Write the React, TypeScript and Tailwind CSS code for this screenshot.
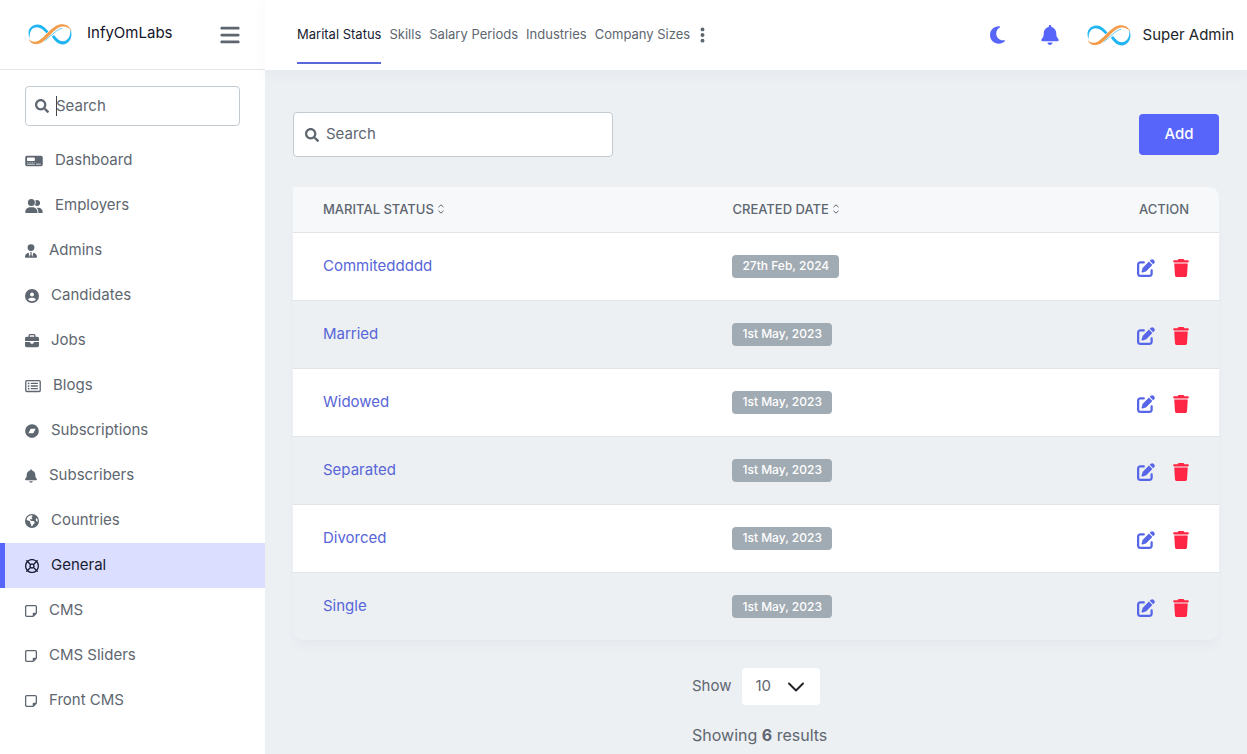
import { useState } from "react";
import { FaSearch } from "react-icons/fa";
import {
  FaBandcamp,
  FaBars,
  FaBell,
  FaBriefcase,
  FaCircleUser,
  FaEarthAmericas,
  FaEllipsisVertical,
  FaMoon,
  FaPenToSquare,
  FaRegLifeRing,
  FaRegNoteSticky,
  FaRegRectangleList,
  FaTachographDigital,
  FaTrash,
  FaUserGroup,
  FaUserTie,
} from "react-icons/fa6";

const menu = [
  { name: "Dashboard", icon: FaTachographDigital, width: "w-[18px]" },
  { name: "Employers", icon: FaUserGroup, width: "w-[18px]" },
  { name: "Admins", icon: FaUserTie, width: "w-3" },
  { name: "Candidates", icon: FaCircleUser, width: "w-[14px]" },
  { name: "Jobs", icon: FaBriefcase, width: "w-[14px]" },
  { name: "Blogs", icon: FaRegRectangleList, width: "w-4" },
  { name: "Subscriptions", icon: FaBandcamp, width: "w-[14px]" },
  { name: "Subscribers", icon: FaBell, width: "w-3" },
  { name: "Countries", icon: FaEarthAmericas, width: "w-[14px]" },
  { name: "General", icon: FaRegLifeRing, width: "w-[14px]" },
  { name: "CMS", icon: FaRegNoteSticky, width: "w-3" },
  { name: "CMS Sliders", icon: FaRegNoteSticky, width: "w-3" },
  { name: "Front CMS", icon: FaRegNoteSticky, width: "w-3" },
];

const tabs = ["Marital Status", "Skills", "Salary Periods", "Industries", "Company Sizes"];

const statuses = [
  { name: "Commiteddddd", date: "27th Feb, 2024" },
  { name: "Married", date: "1st May, 2023" },
  { name: "Widowed", date: "1st May, 2023" },
  { name: "Separated", date: "1st May, 2023" },
  { name: "Divorced", date: "1st May, 2023" },
  { name: "Single", date: "1st May, 2023" },
];

function Logo() {
  return (
    <svg viewBox="0 0 44 21" className="h-[21px] w-11 shrink-0" aria-hidden="true">
      {/* left loop */}
      <path
        d="M1.800 14.500C-1 9 0.500 1 9.500 0.500C14 0.500 17.500 4 20.500 7.500L18.500 9.300C15.500 6 12.500 3.500 8.500 3.300C3.500 3.500 1 8.500 1.800 14.500Z"
        fill="#1fb4f2"
      />
      {/* right loop */}
      <path
        d="M42 4.500C45.500 11 42.500 20 34.500 20.500C30 20.500 27 17 23.800 12.800L26 11C29 14.500 31.500 17.300 35 17.200C40 17 43.500 11.500 42 4.500Z"
        fill="#1fb4f2"
      />
      <path d="M16.500 17L26 9C28.500 6.800 31 5 34 4.300" fill="none" stroke="#1fb4f2" strokeWidth="0.7" />
      {/* ribbon across both loops */}
      <path
        d="M0.500 14.500C3 18.300 8 18.800 12 15.700C18 11.200 22 5.500 27.500 2.200C33 -1 40.500 -0.500 43.500 7C40 2.200 34.500 1.200 29.500 4.200C23.500 8.200 20 14 14.500 18C9.500 21.500 2.500 21 0.500 14.500Z"
        fill="#f39d4c"
      />
    </svg>
  );
}

function SortIcon() {
  return (
    <svg viewBox="0 0 6 10" className="h-[10px] w-[6px]" fill="none" stroke="currentColor" aria-hidden="true">
      <path d="M0.500 3.200L3 0.800L5.500 3.200M0.500 6.800L3 9.200L5.500 6.800" />
    </svg>
  );
}

export default function App() {
  const [active, setActive] = useState("General");
  const [tab, setTab] = useState("Marital Status");

  return (
    <div className="flex min-h-screen bg-[#ecf0f3] font-['Inter','Noto_Sans',sans-serif] text-[15px] text-[#5e6670]">
      {/* Sidebar */}
      <aside className="w-[265px] shrink-0 bg-white">
        <div className="flex h-[70px] items-center border-b border-[#e3e7ea] pr-[25px] pl-7">
          <Logo />
          <a href="#" className="ml-[15px] pb-0.5 text-[#14142b]">
            InfyOmLabs
          </a>
          <button type="button" aria-label="Toggle menu" className="ml-auto">
            <FaBars className="h-[22px] w-5" />
          </button>
        </div>
        <div className="px-[25px] pt-4 pb-3">
          <div className="relative flex h-10 items-center gap-[7px] rounded border border-[#c3cbd1] px-[9px]">
            <FaSearch className="size-[14px] shrink-0" />
            <input
              type="search"
              aria-label="Search menu"
              placeholder="Search"
              className="w-full min-w-0 bg-transparent outline-none placeholder:text-[#5e6670] placeholder:opacity-100"
            />
            {/* text cursor */}
            <span className="absolute top-[9px] left-[30px] h-5 w-px bg-[#3f464d]" />
          </div>
        </div>
        <nav>
          {menu.map(({ name, icon: Icon, width }) => (
            <a
              key={name}
              href="#"
              onClick={() => setActive(name)}
              className={
                active === name
                  ? "flex h-[45px] items-center gap-3 border-l-[5px] border-[#5765fb] bg-[#dbdefe] pl-5 text-[#181c32]"
                  : "flex h-[45px] items-center gap-3 border-l-[5px] border-transparent pl-5"
              }
            >
              <Icon className={"mt-px h-[14px] shrink-0 " + width} />
              {name}
            </a>
          ))}
        </nav>
      </aside>

      <div className="flex min-w-0 flex-1 flex-col">
        {/* Top bar */}
        <header className="flex h-[70px] items-center bg-white pr-[13px] pl-8 shadow-[0_4px_14px_rgba(70,80,120,0.04)]">
          <nav className="flex items-center gap-2 text-[13px]">
            {tabs.map((t) => (
              <a
                key={t}
                href="#"
                onClick={() => setTab(t)}
                className={
                  tab === t
                    ? "flex h-[58px] items-center border-b-2 border-[#5868d8] pt-0.5 whitespace-nowrap text-[#181c32]"
                    : "flex h-[58px] items-center border-b-2 border-transparent pt-0.5 whitespace-nowrap"
                }
              >
                {t}
              </a>
            ))}
            <button type="button" aria-label="More" className="ml-0.5">
              <FaEllipsisVertical className="h-[18px] w-[5px]" />
            </button>
          </nav>
          <div className="ml-auto flex items-center">
            <button type="button" aria-label="Dark mode" className="mr-9 text-[#5765fb]">
              <FaMoon className="h-5 w-[15px]" />
            </button>
            <button type="button" aria-label="Notifications" className="mr-7 text-[#5765fb]">
              <FaBell className="h-5 w-[18px]" />
            </button>
            <button type="button" className="flex items-center gap-3 text-[#212529]">
              <Logo />
              Super Admin
            </button>
          </div>
        </header>

        <main className="px-7 pt-[42px]">
          <div className="flex items-center justify-between">
            <div className="flex h-[45px] w-80 items-center gap-[7px] rounded border border-[#c3cbd1] bg-white px-[11px]">
              <FaSearch className="size-[14px] shrink-0" />
              <input
                type="search"
                aria-label="Search marital status"
                placeholder="Search"
                className="w-full min-w-0 bg-transparent outline-none placeholder:text-[#5e6670] placeholder:opacity-100"
              />
            </div>
            <button type="button" className="h-[41px] w-20 rounded bg-[#5765fb] font-medium text-white">
              Add
            </button>
          </div>

          {/* Table */}
          <div className="mt-[30px] overflow-hidden rounded-[10px] rounded-tl-none shadow-[0_8px_12px_-4px_rgba(70,80,160,0.05)]">
            <table className="w-full table-fixed border-collapse text-left">
              <thead>
                <tr className="h-[45px] border-b border-[#dfe4e8] bg-[#f6f8fa] text-[13px]">
                  <th className="w-[44%] pl-[30px] font-medium">
                    <button type="button" className="flex items-center gap-1">
                      MARITAL STATUS <SortIcon />
                    </button>
                  </th>
                  <th className="pl-8 font-medium">
                    <button type="button" className="flex items-center gap-1">
                      CREATED DATE <SortIcon />
                    </button>
                  </th>
                  <th className="w-[120px] pr-[30px] text-right font-medium">ACTION</th>
                </tr>
              </thead>
              <tbody>
                {statuses.map((s) => (
                  <tr key={s.name} className="h-[68px] border-b border-[#dfe4e8] last:border-b-0 odd:bg-white">
                    <td className="pl-[30px]">
                      <a href="#" className="text-[#5765d8]">
                        {s.name}
                      </a>
                    </td>
                    <td className="pl-8">
                      <span className="inline-flex h-[23px] items-center rounded bg-[#a1abb3] px-[10px] text-xs font-medium text-white">
                        {s.date}
                      </span>
                    </td>
                    <td className="pr-[30px]">
                      <div className="flex items-center justify-end gap-[18px] pt-1">
                        <button type="button" aria-label={"Edit " + s.name} className="text-[#5765e8]">
                          <FaPenToSquare className="size-[18px]" />
                        </button>
                        <button type="button" aria-label={"Delete " + s.name} className="text-[#ff2645]">
                          <FaTrash className="h-[18px] w-4" />
                        </button>
                      </div>
                    </td>
                  </tr>
                ))}
              </tbody>
            </table>
          </div>

          {/* Pagination */}
          <div className="mx-auto mt-7 w-32 pb-[7px] whitespace-nowrap">
            <div className="flex items-center gap-2.5">
              <label htmlFor="per-page">Show</label>
              <div className="relative">
                <select
                  id="per-page"
                  defaultValue="10"
                  className="h-[37px] w-[78px] appearance-none rounded bg-white pl-[14px] text-[15px]"
                >
                  <option>10</option>
                  <option>25</option>
                  <option>50</option>
                </select>
                <svg
                  viewBox="0 0 16 16"
                  className="pointer-events-none absolute top-[11px] right-4 size-4"
                  fill="none"
                  stroke="#212529"
                  strokeWidth="2"
                  strokeLinecap="round"
                  strokeLinejoin="round"
                >
                  <path d="M1 4.500L8 11.500L15 4.500" />
                </svg>
              </div>
            </div>
            <p className="mt-[18px] text-base">
              Showing <b className="font-bold">6</b> results
            </p>
          </div>
        </main>
      </div>
    </div>
  );
}
